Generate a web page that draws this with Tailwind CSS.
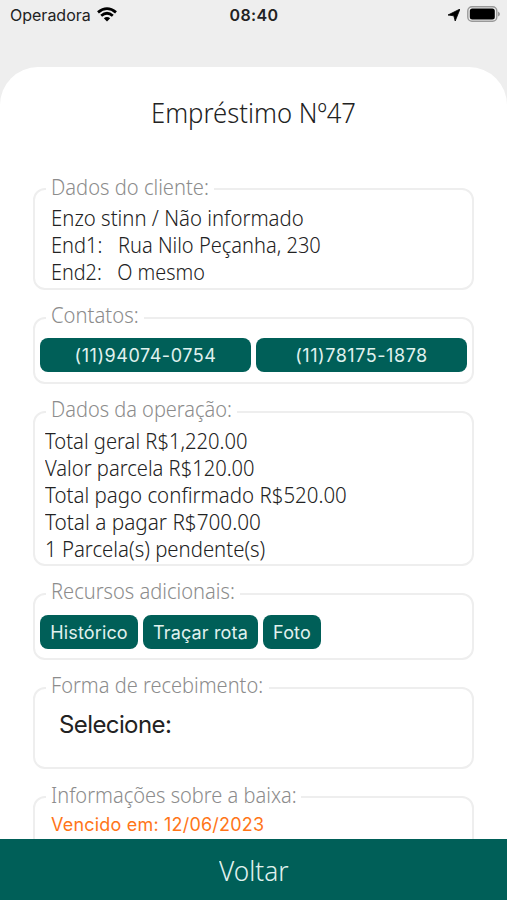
<!DOCTYPE html>
<html lang="pt-BR">
<head>
<meta charset="utf-8">
<title>Empréstimo</title>
<script src="https://cdn.jsdelivr.net/npm/@tailwindcss/browser@4"></script>
</head>
<body class="w-[507px] h-[900px] overflow-hidden bg-[#eeeeee] flex flex-col font-['Noto_Sans','Open_Sans',sans-serif] font-light text-[22px] leading-[27px] text-[#222]">
<header class="h-[67px] shrink-0 pt-[3px] px-[10px] grid grid-cols-3 font-['Inter',sans-serif] text-base leading-6 font-normal text-[#222]">
  <div class="flex items-start gap-[6px] h-6"><span>Operadora</span>
    <svg class="mt-1 w-5 h-[15px] shrink-0" viewBox="0 0 20 15" fill="none" stroke="#000" stroke-width="2.8"><path d="M1 5.4Q10-2.2 19 5.4M4.2 8.8Q10 3.8 15.8 8.8"/><path d="M6.8 11.3Q10 8.8 13.2 11.3L10 14.5Z" fill="#000" stroke="none"/></svg></div>
  <div class="text-center font-semibold tracking-[0.4px] pl-px">08:40</div>
  <div class="flex justify-end items-start gap-[7px]">
    <svg class="mt-[6px] w-3 h-3" viewBox="0 0 12 12"><path d="M12 0L7.2 12L5.8 6.8L0 6Z" fill="#000" stroke="#000" stroke-width=".8"/></svg>
    <svg class="mt-[3px] -mr-[3px] w-[33px] h-4" viewBox="0 0 33 16"><rect x=".8" y=".8" width="29" height="14.4" rx="4.2" fill="none" stroke="#999" stroke-width="1.4"/><rect x="2.8" y="2.6" width="25" height="10.8" rx="2.5" fill="#000"/><path d="M31 5.5Q33 6.5 33 8T31 10.5Z" fill="#999"/></svg>
  </div>
</header>
<main class="flex-1 min-h-0 overflow-hidden bg-white rounded-t-[38px] px-[33px]">
  <h1 class="mt-[28px] h-9 leading-9 text-[27px] text-center whitespace-nowrap scale-x-[.95]">Empréstimo Nº47</h1>
  <div class="mt-11 flex flex-col gap-[14px]">
    <fieldset class="h-[115px] border-2 border-[#eeeeee] rounded-xl pl-[11px]">
      <legend class="w-[168px] h-7 px-[5px] leading-[22px] text-[#8c8c8c] whitespace-nowrap"><span class="block w-max origin-left scale-x-[.915]">Dados do cliente:</span></legend>
      <div class="pl-[5px] pt-px whitespace-pre"><p class="w-max origin-left scale-x-[.925]">Enzo stinn / Não informado</p><p class="w-max origin-left scale-x-[.911]">End1:   Rua Nilo Peçanha, 230</p><p class="w-max origin-left scale-x-[.9]">End2:   O mesmo</p></div>
    </fieldset>
    <fieldset class="h-20 border-2 border-[#eeeeee] rounded-xl pl-[11px]">
      <legend class="w-[98px] h-7 px-[5px] leading-[21px] text-[#8c8c8c] whitespace-nowrap"><span class="block w-max origin-left scale-x-[.92]">Contatos:</span></legend>
      <div class="-ml-[6px] mr-[5px] mt-[6px] grid grid-cols-2 gap-[5px] font-['Inter',sans-serif] font-normal text-[18px] tracking-[0.55px] text-[#e0f2ef]">
        <button class="h-[34px] rounded-lg bg-[#005f58]">(11)94074-0754</button><button class="h-[34px] rounded-lg bg-[#005f58]">(11)78175-1878</button></div>
    </fieldset>
    <fieldset class="h-[168px] border-2 border-[#eeeeee] rounded-xl pl-[11px]">
      <legend class="w-[191px] h-7 px-[5px] leading-[21px] text-[#8c8c8c] whitespace-nowrap"><span class="block w-max origin-left scale-x-[.908]">Dados da operação:</span></legend>
      <div class="-ml-[1.5px] pt-px"><p class="w-max origin-left scale-x-[.917]">Total geral R$1,220.00</p><p class="w-max origin-left scale-x-[.915]">Valor parcela R$120.00</p><p class="w-max origin-left scale-x-[.93]">Total pago confirmado R$520.00</p><p class="w-max origin-left scale-x-[.943]">Total a pagar R$700.00</p><p class="w-max origin-left scale-x-[.925]">1 Parcela(s) pendente(s)</p></div>
    </fieldset>
    <fieldset class="h-20 border-2 border-[#eeeeee] rounded-xl pl-[11px]">
      <legend class="w-[194px] h-7 px-[5px] leading-[21px] text-[#8c8c8c] whitespace-nowrap"><span class="block w-max origin-left scale-x-[.913]">Recursos adicionais:</span></legend>
      <div class="-ml-[6px] mt-[7px] flex gap-[5px] font-['Inter',sans-serif] font-normal text-[18px] tracking-[0.15px] text-[#e0f2ef]">
        <button class="w-[98px] h-[34px] rounded-lg bg-[#005f58]">Histórico</button><button class="w-[115px] h-[34px] rounded-lg bg-[#005f58]">Traçar rota</button><button class="w-[58px] h-[34px] rounded-lg bg-[#005f58]">Foto</button></div>
    </fieldset>
    <fieldset class="h-[95px] border-2 border-[#eeeeee] rounded-xl pl-[11px]">
      <legend class="w-[223px] h-7 px-[5px] leading-[21px] text-[#8c8c8c] whitespace-nowrap"><span class="block w-max origin-left scale-x-[.91]">Forma de recebimento:</span></legend>
      <div class="pl-[13px] pt-[9px] font-['Inter',sans-serif] font-normal text-[24px] tracking-[-0.6px]">Selecione:</div>
    </fieldset>
    <fieldset class="h-[115px] border-2 border-[#eeeeee] rounded-xl pl-[11px]">
      <legend class="w-[255px] h-7 px-[5px] leading-[22px] text-[#8c8c8c] whitespace-nowrap"><span class="block w-max origin-left scale-x-[.91]">Informações sobre a baixa:</span></legend>
      <div class="pl-[5px] font-['Inter',sans-serif] font-normal text-[18px] tracking-[0.2px] text-[#ff7518]">Vencido em: 12/06/2023</div>
    </fieldset>
  </div>
</main>
<button class="h-[61px] shrink-0 bg-[#005f58] text-[27px] text-[#e0f2ef] pt-[2px]"><span class="inline-block scale-x-[.97]">Voltar</span></button>
</body>
</html>
